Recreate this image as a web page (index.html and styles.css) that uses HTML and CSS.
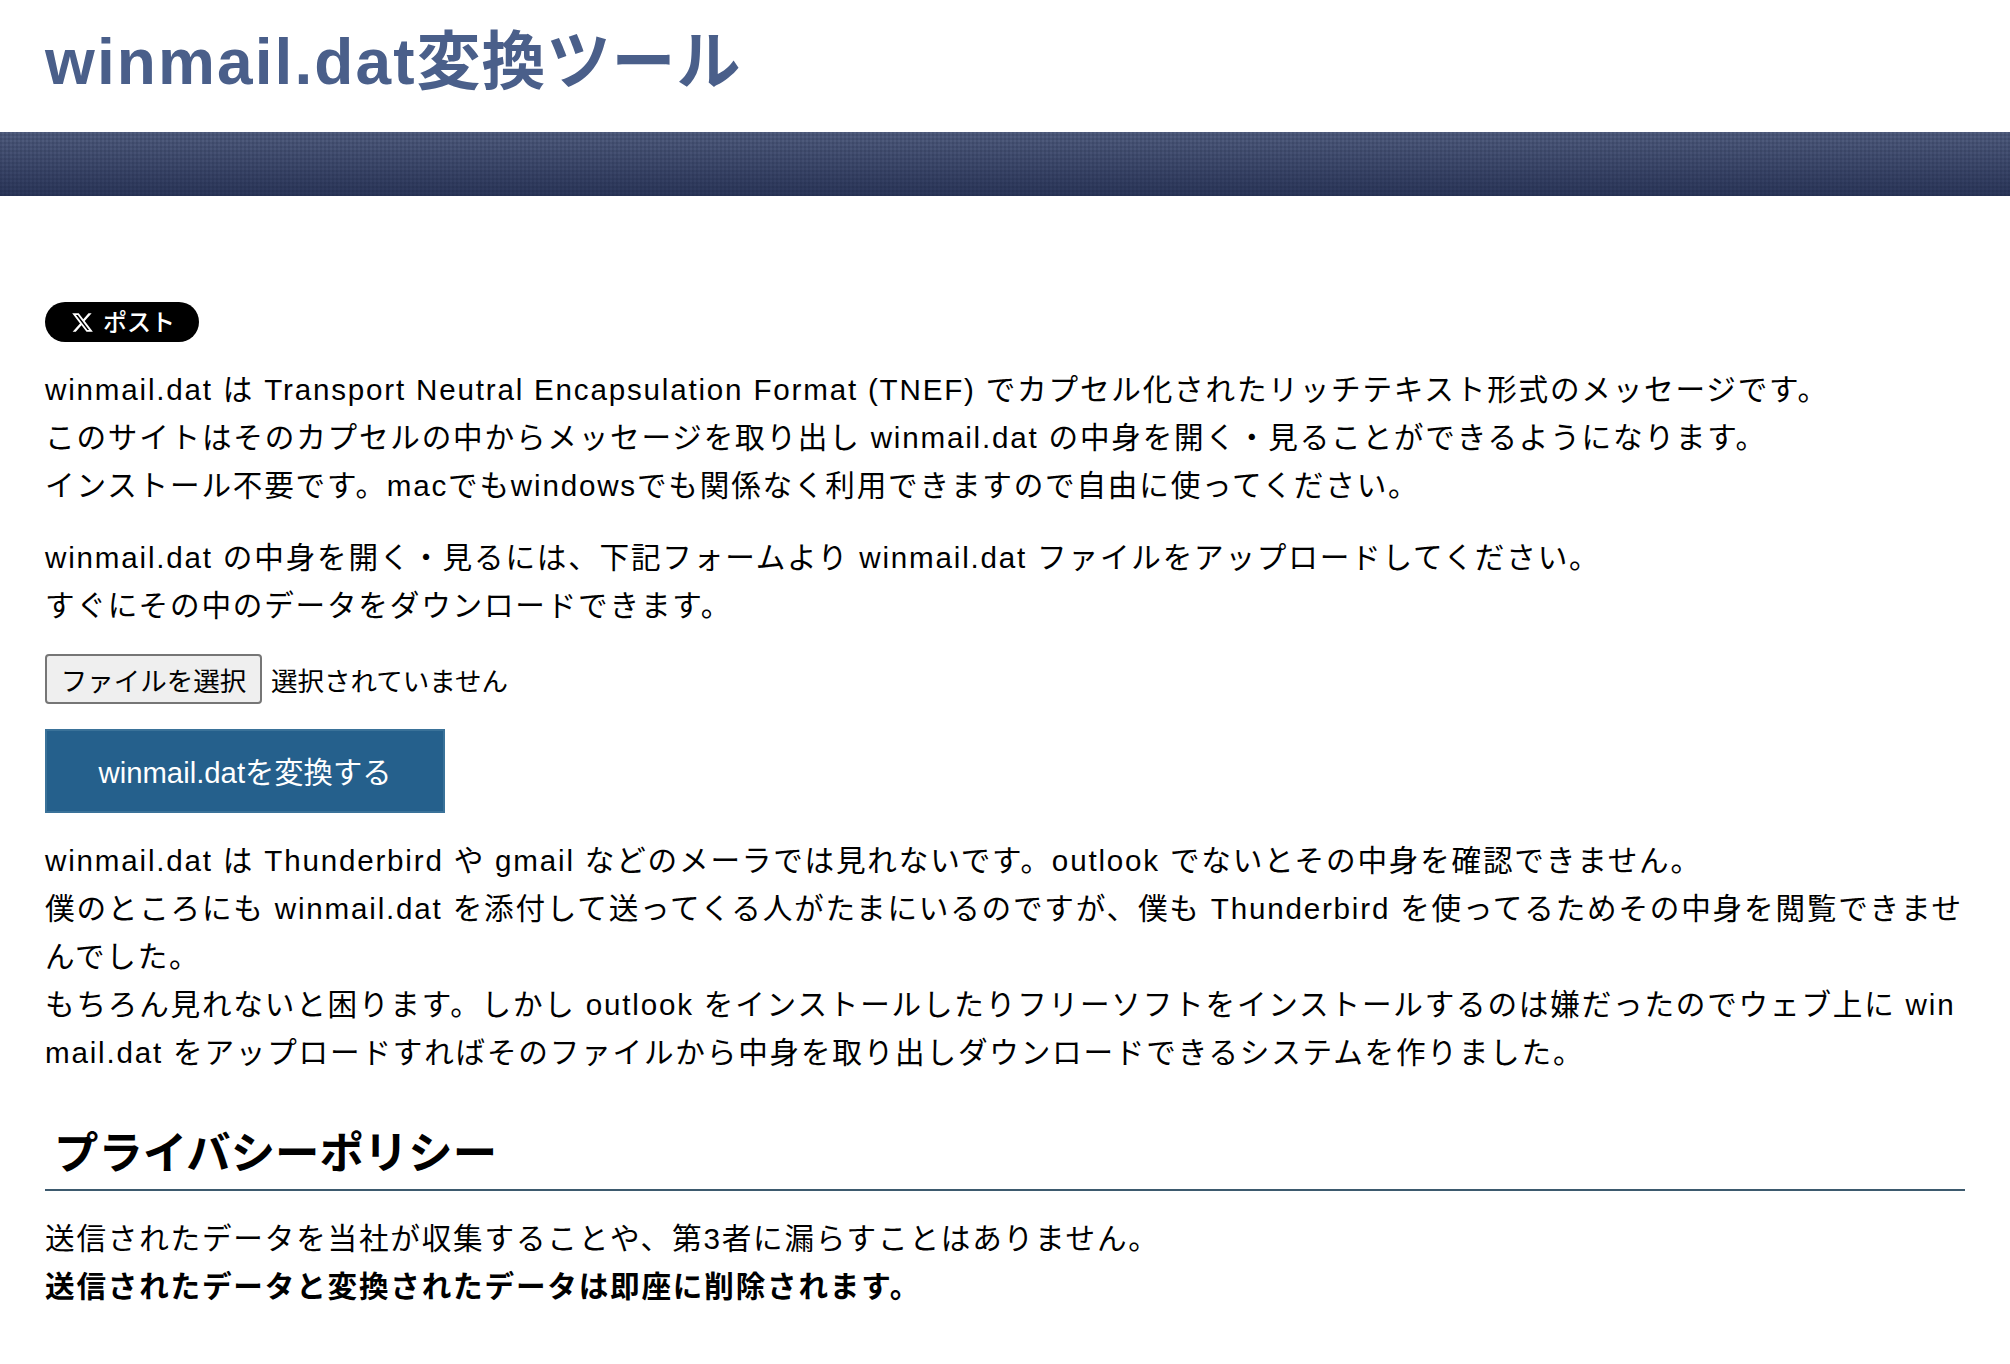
FILE: index.html
```html
<!DOCTYPE html>
<html lang="ja">
<head>
    <meta charset="UTF-8">
    <meta name="viewport" content="width=device-width, initial-scale=1.0">
    <title>winmail.dat変換ツール</title>
    <link rel="stylesheet" href="styles.css">
</head>
<body>

    <!-- Header -->
    <header class="site-header">
        <h1 class="site-title"><span class="title-en">winmail.dat</span>変換ツール</h1>
    </header>
    <div class="header-bar"></div>

    <main class="content">
        <a href="#" class="post-btn">
            <svg class="post-icon" viewBox="0 0 24 24"><path d="M18.244 2.25h3.308l-7.227 8.26 8.502 11.24H16.17l-5.214-6.817L4.99 21.75H1.68l7.73-8.835L1.254 2.25H8.08l4.713 6.231zm-1.161 17.52h1.833L7.084 4.126H5.117z"/></svg>
            <span class="post-label">ポスト</span>
        </a>

        <p class="text">winmail.dat は Transport Neutral Encapsulation Format (TNEF) でカプセル化されたリッチテキスト形式のメッセージです。<br>このサイトはそのカプセルの中からメッセージを取り出し winmail.dat の中身を開く・見ることができるようになります。<br>インストール不要です。macでもwindowsでも関係なく利用できますので自由に使ってください。</p>

        <p class="text">winmail.dat の中身を開く・見るには、下記フォームより winmail.dat ファイルをアップロードしてください。<br>すぐにその中のデータをダウンロードできます。</p>

        <!-- Upload Form -->
        <form class="upload-form">
            <div class="file-row">
                <button type="button" class="file-btn">ファイルを選択</button>
                <span class="file-name">選択されていません</span>
            </div>
            <button type="submit" class="convert-btn">winmail.datを変換する</button>
        </form>

        <p class="text">winmail.dat は Thunderbird や gmail などのメーラでは見れないです。outlook でないとその中身を確認できません。<br>僕のところにも winmail.dat を添付して送ってくる人がたまにいるのですが、僕も Thunderbird を使ってるためその中身を閲覧できませんでした。<br>もちろん見れないと困ります。しかし outlook をインストールしたりフリーソフトをインストールするのは嫌だったのでウェブ上に winmail.dat をアップロードすればそのファイルから中身を取り出しダウンロードできるシステムを作りました。</p>

        <h2 class="section-title">プライバシーポリシー</h2>
        <p class="text">送信されたデータを当社が収集することや、第3者に漏らすことはありません。<br><strong>送信されたデータと変換されたデータは即座に削除されます。</strong></p>
    </main>

</body>
</html>
```

FILE: styles.css
```css
/* General Reset */
* {
    margin: 0;
    padding: 0;
    box-sizing: border-box;
}

body {
    background-color: #fff;
    color: #000;
    font-family: "Liberation Sans", "Noto Sans CJK JP", sans-serif;
    font-size: 24px;
}

/* Header */
.site-header {
    height: 132px;
    padding: 25px 45px 0;
}

.site-title {
    color: #4a5f8a;
    font-size: 64px;
    line-height: 74px;
    letter-spacing: 1px;
    font-weight: bold;
}

.title-en {
    letter-spacing: 2.1px;
}

.header-bar {
    height: 64px;
    background:
        repeating-linear-gradient(90deg, rgba(20, 30, 60, 0.14) 0 2px, transparent 2px 4px),
        repeating-linear-gradient(0deg, rgba(20, 30, 60, 0.14) 0 2px, transparent 2px 4px),
        linear-gradient(#535f80, #2b3659);
}

/* Main Content */
.content {
    padding: 106px 45px 0;
}

.post-btn {
    display: flex;
    align-items: center;
    width: 154px;
    height: 40px;
    padding-left: 26px;
    border-radius: 20px;
    background-color: #000;
    color: #fff;
    font-size: 24px;
    font-weight: 500;
    text-decoration: none;
}

.post-icon {
    width: 23px;
    height: 23px;
    margin-right: 9px;
    fill: #fff;
}

.post-label {
    padding-bottom: 3px;
}

.text {
    margin-top: 24px;
    font-size: 29.6px;
    line-height: 48px;
    letter-spacing: 1.8px;
    word-break: break-all;
}

/* Upload Form */
.upload-form {
    margin-top: 24px;
}

.file-row {
    display: flex;
    align-items: center;
    gap: 9px;
}

.file-btn {
    width: 217px;
    height: 50px;
    border: 2px solid #767676;
    border-radius: 4px;
    background-color: #efefef;
    color: #000;
    font-family: inherit;
    font-size: 26.5px;
}

.file-name {
    font-size: 26.5px;
}

.convert-btn {
    display: block;
    width: 400px;
    height: 84px;
    margin-top: 25px;
    padding-bottom: 2px;
    border: 2px solid #3a7299;
    background-color: #25608c;
    color: #fff;
    font-family: inherit;
    font-size: 29.3px;
}

/* Privacy Policy */
.section-title {
    margin-top: 36px;
    padding: 12px 0 6px 9px;
    border-bottom: 2px solid #3d5a6e;
    font-size: 44.4px;
    line-height: 58px;
}

.section-title + .text {
    margin-top: 24px;
}
```
